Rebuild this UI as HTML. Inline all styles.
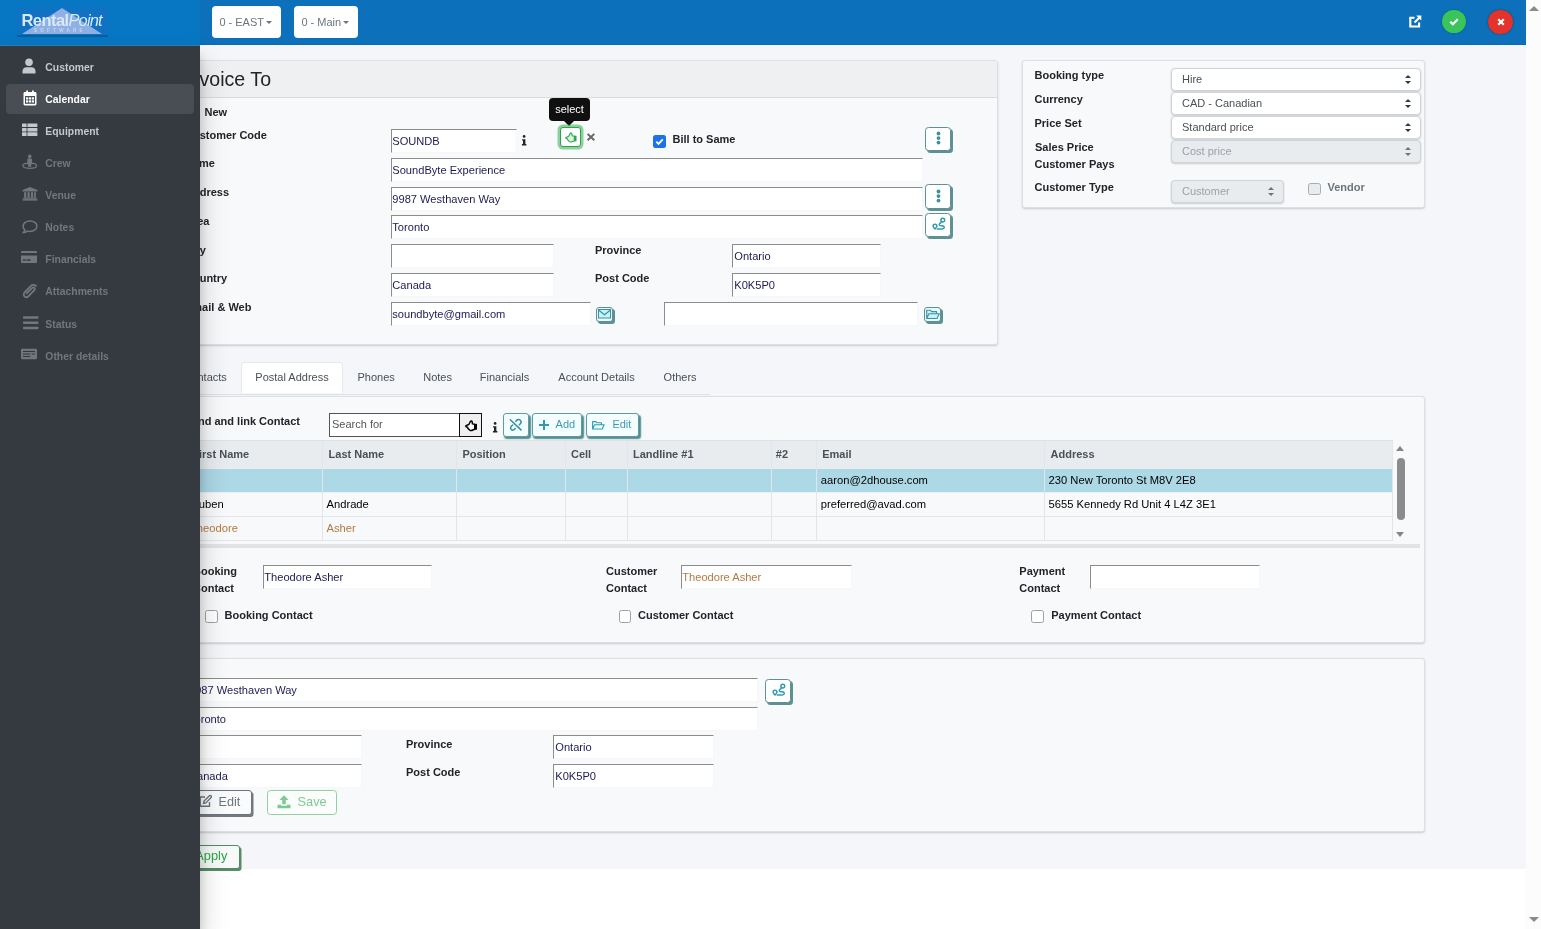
<!DOCTYPE html>
<html>
<head>
<meta charset="utf-8">
<title>Invoice To</title>
<style>
*{box-sizing:border-box;margin:0;padding:0}
html,body{width:1541px;height:929px;overflow:hidden;background:#fff;font-family:"Liberation Sans",sans-serif;font-size:11px;color:#212529}
.abs{position:absolute}
#main{position:absolute;left:0;top:45px;width:1526px;height:824px;background:#f4f6f9}
#hdr{will-change:transform;position:absolute;left:0;top:0;width:1526px;height:45px;background:#0c71ba;border-bottom:1px solid #0b69ad}
#side{will-change:transform;position:absolute;left:0;top:46px;width:200px;height:883px;background:#343a40;box-shadow:0 14px 28px rgba(0,0,0,.2),0 10px 10px rgba(0,0,0,.17)}
#sb{position:absolute;left:1526px;top:0;width:15px;height:929px;background:#fcfcfc}
.card{position:absolute;background:#f8f9fa;border:1px solid #dcdfe3;border-radius:3px;box-shadow:0 1px 2px rgba(0,0,0,.18)}
.lbl{position:absolute;font-weight:700;font-size:11px;white-space:nowrap;color:#212529;line-height:13px}
.inp{position:absolute;height:24px;background:#fff;border:1px solid #f5f7fb;border-top-color:#8c8c8c;border-left-color:#8c8c8c;font-size:11.1px;line-height:23px;padding-left:0.3px;color:#1d1b55;white-space:nowrap;overflow:hidden}
.hbtn{position:absolute;top:6px;height:32px;background:#fff;border-radius:4px;color:#6c757d;font-size:11px;line-height:32px;padding-left:7.400px;white-space:nowrap}
.hbtn i{display:inline-block;width:0;height:0;border-left:3px solid transparent;border-right:3px solid transparent;border-top:3px solid #6c757d;margin-left:2px;vertical-align:2px}
.nav{margin-top:-1px;position:absolute;left:6px;width:188px;height:30px;border-radius:4px;color:#c2c7d0;font-weight:700;font-size:10.4px;line-height:30px}
.nav span{position:absolute;left:39.3px;top:1px;white-space:nowrap}
.nav svg{position:absolute;left:16px;top:7px;width:16px;height:16px;fill:currentColor}
.nav.act{background:#494e55;color:#fff}
.nav.dis{color:#72777e}

.tbtn{position:absolute;background:#fff;border:1px solid #5f9094;border-radius:3.5px;box-shadow:2px 2px 0 #5f9094}
.tbtn svg{position:absolute}
.cb{position:absolute;width:13px;height:13px;border:1px solid #a0a0a0;border-radius:2.5px;background:#fff}

.sel{position:absolute;height:23px;border:1px solid #ced4da;border-radius:4px;background:#fff;box-shadow:0 1px 2px rgba(0,0,0,.18);font-size:11px;line-height:21px;padding-left:10px;color:#495057;white-space:nowrap}
.sel.dis{background:#e9ecef;color:#9ba1a7}
.sel i{position:absolute;right:9px;top:6.5px;width:6px;height:9px}
.sel i:before,.sel i:after{content:"";position:absolute;left:0;width:0;height:0;border-left:3px solid transparent;border-right:3px solid transparent}
.sel i:before{top:0;border-bottom:3.5px solid #343a40}
.sel i:after{bottom:0;border-top:3.5px solid #343a40}
.sel.dis i:before{border-bottom-color:#6c757d}
.sel.dis i:after{border-top-color:#6c757d}

.tab{position:absolute;top:370px;font-size:11px;line-height:14px;color:#495057;white-space:nowrap}
.th{position:absolute;top:448px;font-weight:700;font-size:11px;line-height:13px;color:#495057;white-space:nowrap}
.td{position:absolute;font-size:11.2px;line-height:13px;color:#000;white-space:nowrap}
.vl{position:absolute;top:441px;width:1px;height:99px;background:#e2e5e9}
.cbtn{position:absolute;top:413px;height:24px;background:#f3fdff;border:1px solid #5f9ea0;border-radius:3px;box-shadow:1.500px 2px 1.500px #4d8a8f;color:#3f9aae;font-size:11px;line-height:21.500px;white-space:nowrap}
</style>
</head>
<body>
<div id="main"></div>
<div id="content" class="abs" style="left:0;top:0;width:1526px;height:929px;will-change:transform">

<!-- Invoice To card -->
<div class="card" style="left:170px;top:60px;width:828px;height:285px"></div>
<div class="abs" style="left:171px;top:61px;width:826px;height:37px;background:#eff0f1;border-bottom:1px solid #d9dbde;border-radius:3px 3px 0 0"></div>
<div class="abs" style="left:183.200px;top:66.300px;font-size:19.600px;line-height:26px;color:#212529;white-space:nowrap">Invoice To</div>
<div class="lbl" style="left:204.5px;top:106px">New</div>
<div class="lbl" style="left:185px;top:129px">Customer Code</div>
<div class="lbl" style="left:185px;top:157px">Name</div>
<div class="lbl" style="left:185px;top:186px">Address</div>
<div class="lbl" style="left:185px;top:215px">Area</div>
<div class="lbl" style="left:185px;top:244px">City</div>
<div class="lbl" style="left:185px;top:272px">Country</div>
<div class="lbl" style="left:185px;top:301px">Email &amp; Web</div>
<div class="inp" style="left:391px;top:129px;width:126px">SOUNDB</div>
<div class="inp" style="left:391px;top:158px;width:532px">SoundByte Experience</div>
<div class="inp" style="left:391px;top:187px;width:532px">9987 Westhaven Way</div>
<div class="inp" style="left:391px;top:215px;width:532px">Toronto</div>
<div class="inp" style="left:391px;top:244px;width:163px"></div>
<div class="inp" style="left:391px;top:273px;width:163px">Canada</div>
<div class="inp" style="left:391px;top:302px;width:200px">soundbyte@gmail.com</div>
<div class="inp" style="left:664px;top:302px;width:254px"></div>
<div class="lbl" style="left:595px;top:244px">Province</div>
<div class="lbl" style="left:595px;top:272px">Post Code</div>
<div class="inp" style="left:732px;top:244px;width:149px;padding-left:1.300px">Ontario</div>
<div class="inp" style="left:732px;top:273px;width:149px;padding-left:1.300px">K0K5P0</div>


<!-- info i -->
<svg class="abs" style="left:521.3px;top:135.3px" width="6.4" height="11" viewBox="0 0 7 12"><circle cx="3.4" cy="1.6" r="1.5" fill="#212529"/><path d="M1.2 4.6h3.6v5.2h1.1v1.6H1v-1.6h1.2V6.1H1.2z" fill="#212529"/></svg>
<!-- tooltip -->
<div class="abs" style="left:549px;top:98px;width:41px;height:23px;background:#101010;border-radius:4px;color:#fff;font-size:11px;line-height:22px;text-align:center">select</div>
<div class="abs" style="left:564px;top:121px;width:0;height:0;border-left:5px solid transparent;border-right:5px solid transparent;border-top:5px solid #101010"></div>
<!-- select button -->
<div class="abs" style="left:560px;top:127px;width:21px;height:20px;background:#fff;border:1px solid #28a745;border-radius:3px;box-shadow:0 0 0 2.5px rgba(40,167,69,.5)">
<svg class="abs" style="left:4px;top:4px" width="12" height="11" viewBox="0 0 12 11"><path d="M1 5.400L3.700 4.300 5.100 1.500C5.600.600 6.800.800 6.900 1.800L7.100 3.700 9.300 4.100V8.900L7.500 9.600C6.500 10.100 5.300 10.100 4.500 9.600L3.300 8.500C2.700 8.300 2.500 7.600 2.700 7.100L1.300 6.500C.700 6.300.600 5.600 1 5.400Z" fill="#dcf5e3" stroke="#28a745" stroke-width="1.100" stroke-linejoin="round"/><rect x="9.300" y="3.700" width="2.200" height="5.600" fill="#28a745"/></svg>
</div>
<!-- times -->
<svg class="abs" style="left:586px;top:132px" width="10" height="10" viewBox="0 0 10 10"><path d="M1.600 1.900L8.300 8.300M8.300 1.900L1.600 8.300" stroke="#666" stroke-width="2" fill="none"/></svg>
<!-- checkbox bill to same -->
<div class="abs" style="left:653px;top:134.500px;width:13px;height:13px;background:#1a73e8;border-radius:2.500px"><svg class="abs" style="left:0;top:0" width="13" height="13" viewBox="0 0 13 13"><path d="M3.300 6.700l2.200 2.200 4.300-4.500" stroke="#fff" stroke-width="1.800" fill="none"/></svg></div>
<div class="lbl" style="left:672.500px;top:133px">Bill to Same</div>
<!-- ellipsis buttons -->
<div class="tbtn" style="left:925px;top:127px;width:26px;height:24px"><svg style="left:10px;top:3px" width="5" height="15" viewBox="0 0 5 15"><circle cx="2.5" cy="2.500" r="1.900" fill="#3f8f9f"/><circle cx="2.5" cy="7.100" r="1.900" fill="#3f8f9f"/><circle cx="2.5" cy="11.600" r="1.900" fill="#3f8f9f"/></svg></div>
<div class="tbtn" style="left:925px;top:184px;width:26px;height:25px"><svg style="left:10px;top:3.500px" width="5" height="15" viewBox="0 0 5 15"><circle cx="2.5" cy="2.500" r="1.900" fill="#3f8f9f"/><circle cx="2.5" cy="7.100" r="1.900" fill="#3f8f9f"/><circle cx="2.5" cy="11.600" r="1.900" fill="#3f8f9f"/></svg></div>
<!-- route button -->
<div class="tbtn" style="left:925px;top:213px;width:26px;height:24px"><svg style="left:6px;top:3px" width="15" height="15" viewBox="0 0 15 15"><g fill="none" stroke="#2f9bb3" stroke-width="1.500"><circle cx="10.800" cy="3.200" r="1.900"/><path d="M9.500 5.300C8 6.200 6.600 7 7.600 8.300c.9 1 3.300-.1 4.300 1.100 1 1.300-.2 2.600-1.600 2.600H4.700"/><path d="M3 7.300c1.100 0 1.900.8 1.900 1.800S3 12 3 12 1.100 10.100 1.100 9.100 1.900 7.300 3 7.300z"/></g></svg></div>
<!-- envelope -->
<div class="abs" style="left:596px;top:307px;width:17px;height:15px;background:#e6fbfd;border:1px solid #5f9094;border-radius:3px;box-shadow:2px 2px 0 #5f9094"><svg class="abs" style="left:1px;top:1px" width="13" height="10" viewBox="0 0 13 10"><rect x="0.500" y="0.500" width="12" height="8.500" fill="#c5f3f7" stroke="#3f8f9f" stroke-width="1"/><path d="M0.800 1.200L6.500 5.800 12.200 1.200" fill="none" stroke="#3f8f9f" stroke-width="1.200"/></svg></div>
<!-- folder-open -->
<div class="abs" style="left:924px;top:307px;width:17px;height:15px;background:#e6fbfd;border:1px solid #5f9094;border-radius:3px;box-shadow:2px 2px 0 #5f9094"><svg class="abs" style="left:1px;top:1px" width="14" height="11" viewBox="0 0 14 11"><path d="M0.700 9.500V1.200h3.600l1.300 1.400h5v2M0.700 9.500l2.200-4.700h10.400l-2.300 4.700z" fill="#c5f3f7" stroke="#3f8f9f" stroke-width="1.100" stroke-linejoin="round"/></svg></div>

<!-- right panel -->
<div class="card" style="left:1022px;top:60px;width:403px;height:147.500px"></div>
<div class="lbl" style="left:1034.5px;top:69px">Booking type</div>
<div class="lbl" style="left:1034.5px;top:93px">Currency</div>
<div class="lbl" style="left:1034.5px;top:117px">Price Set</div>
<div class="lbl" style="left:1035px;top:141px">Sales Price</div>
<div class="lbl" style="left:1034.5px;top:158px">Customer Pays</div>
<div class="lbl" style="left:1034.5px;top:181px">Customer Type</div>
<div class="sel" style="left:1171px;top:67.5px;width:250px">Hire<i></i></div>
<div class="sel" style="left:1171px;top:91.7px;width:250px">CAD - Canadian<i></i></div>
<div class="sel" style="left:1171px;top:115.800px;width:250px">Standard price<i></i></div>
<div class="sel dis" style="left:1171px;top:139.500px;width:250px">Cost price<i></i></div>
<div class="sel dis" style="left:1171px;top:179.500px;width:113px">Customer<i></i></div>
<div class="cb" style="left:1308px;top:183px;width:13px;height:12px;background:#e9ecef;border-color:#a9adb2"></div>
<div class="lbl" style="left:1327.5px;top:181px;color:#6c757d">Vendor</div>


<!-- tabs -->
<div class="abs" style="left:170px;top:394px;width:540px;height:1px;background:#dee2e6"></div>
<div class="abs" style="left:241px;top:362px;width:101.500px;height:31px;background:#fff;border:1px solid #e6e9ec;border-bottom-color:#fff;border-radius:4px 4px 0 0"></div>
<div class="tab" style="left:183.400px">Contacts</div>
<div class="tab" style="left:255.300px">Postal Address</div>
<div class="tab" style="left:357.500px">Phones</div>
<div class="tab" style="left:423.200px">Notes</div>
<div class="tab" style="left:479.800px">Financials</div>
<div class="tab" style="left:558.300px">Account Details</div>
<div class="tab" style="left:663.600px">Others</div>


<!-- contacts card -->
<div class="card" style="left:170px;top:396px;width:1255px;height:246.500px"></div>
<div class="lbl" style="left:188.200px;top:415px">Find and link Contact</div>
<div class="abs" style="left:329px;top:413px;width:131px;height:24px;background:#fff;border:1px solid #555;font-size:11px;line-height:21px;padding-left:2px;color:#555">Search for</div>
<div class="abs" style="left:459px;top:413px;width:23px;height:24px;background:#efefef;border:1px solid #111;border-right-width:1.500px;border-bottom-width:1.500px">
<svg class="abs" style="left:4.500px;top:6px" width="12.500" height="11.500" viewBox="0 0 12 11"><path d="M1 5.400L3.700 4.300 5.100 1.500C5.600.600 6.800.800 6.900 1.800L7.100 3.700 9.300 4.100V8.900L7.500 9.600C6.500 10.100 5.300 10.100 4.500 9.600L3.300 8.500C2.700 8.300 2.500 7.600 2.700 7.100L1.300 6.500C.700 6.300.600 5.600 1 5.400Z" fill="#fff" stroke="#000" stroke-width="1.400" stroke-linejoin="round"/><rect x="9.300" y="3.700" width="2.300" height="5.600" fill="#000"/></svg>
</div>
<svg class="abs" style="left:491.500px;top:421.600px" width="6.400" height="11" viewBox="0 0 7 12"><circle cx="3.4" cy="1.6" r="1.5" fill="#212529"/><path d="M1.200 4.600h3.600v5.200h1.100v1.600H1v-1.600h1.200V6.100H1.200z" fill="#212529"/></svg>
<div class="cbtn" style="left:503px;width:25.500px"><svg class="abs" style="left:5px;top:4px" width="13" height="13" viewBox="0 0 13 13"><g fill="none" stroke="#348f9c" stroke-width="1.500" stroke-linecap="round"><path d="M1.300 1.800L12 11.900"/><path d="M6.800 3.200L7.600 2.400C8.800 1.200 10.500 1.300 11.400 2.400 12.300 3.500 12.200 4.900 11.300 5.800L10.400 6.700"/><path d="M3.700 7L2.500 8C1.300 9.200 1.300 10.700 2.200 11.500 3.200 12.400 4.600 12.200 5.500 11.300L6.300 10.500"/></g></svg></div>
<div class="cbtn" style="left:532px;width:50px;padding-left:22.600px"><svg class="abs" style="left:5.500px;top:5.500px" width="10" height="10" viewBox="0 0 10 10"><path d="M5 0v10M0 5h10" stroke="#2f9bb3" stroke-width="2" fill="none"/></svg>Add</div>
<div class="cbtn" style="left:586px;width:52.500px;padding-left:25.400px"><svg class="abs" style="left:5.300px;top:6.500px" width="13" height="9" viewBox="0 0 13 9"><path d="M0.600 8V0.600h3.300l1.100 1.200h4.500v1.700M0.600 8l2-4.200h9.600L10.100 8z" fill="none" stroke="#2f9bb3" stroke-width="1.100" stroke-linejoin="round"/></svg>Edit</div>
<!-- table -->
<div class="abs" style="left:171px;top:440px;width:1222px;height:29px;background:#e9ecef;border-top:1px solid #dee2e6"></div>
<div class="abs" style="left:171px;top:469px;width:1222px;height:23px;background:#add8e6"></div>
<div class="abs" style="left:171px;top:492px;width:1222px;height:1px;background:#eef1f4"></div>
<div class="abs" style="left:171px;top:516px;width:1222px;height:1px;background:#e2e5e9"></div>
<div class="abs" style="left:171px;top:540px;width:1222px;height:1px;background:#e2e5e9"></div>
<div class="vl" style="left:322px"></div><div class="vl" style="left:456px"></div><div class="vl" style="left:565px"></div><div class="vl" style="left:627px"></div><div class="vl" style="left:771px"></div><div class="vl" style="left:816px"></div><div class="vl" style="left:1044px"></div><div class="vl" style="left:1392px"></div>
<div class="th" style="left:192.300px">First Name</div>
<div class="th" style="left:328.600px">Last Name</div>
<div class="th" style="left:462.400px">Position</div>
<div class="th" style="left:571px">Cell</div>
<div class="th" style="left:633px">Landline #1</div>
<div class="th" style="left:775.800px">#2</div>
<div class="th" style="left:822.200px">Email</div>
<div class="th" style="left:1050.500px">Address</div>
<div class="td" style="left:820.800px;top:474px">aaron@2dhouse.com</div>
<div class="td" style="left:1048.600px;top:474px">230 New Toronto St M8V 2E8</div>
<div class="td" style="left:190.700px;top:498px">Ruben</div>
<div class="td" style="left:326.500px;top:498px">Andrade</div>
<div class="td" style="left:820.800px;top:498px">preferred@avad.com</div>
<div class="td" style="left:1048.600px;top:498px">5655 Kennedy Rd Unit 4 L4Z 3E1</div>
<div class="td" style="left:190px;top:522px;color:#b47a40">Theodore</div>
<div class="td" style="left:326.500px;top:522px;color:#b47a40">Asher</div>
<!-- table scrollbar -->
<div class="abs" style="left:1396px;top:446px;width:0;height:0;border-left:4.500px solid transparent;border-right:4.500px solid transparent;border-bottom:5px solid #858585"></div>
<div class="abs" style="left:1396px;top:531.500px;width:0;height:0;border-left:4.500px solid transparent;border-right:4.500px solid transparent;border-top:5px solid #858585"></div>
<div class="abs" style="left:1396.500px;top:458px;width:8.500px;height:62px;background:#8c8c8c;border-radius:4px"></div>
<!-- gray bar -->
<div class="abs" style="left:171px;top:544px;width:1249px;height:4px;background:#e1e3e6"></div>
<!-- contact fields -->
<div class="lbl" style="left:193px;top:563.300px;line-height:17px">Booking<br>Contact</div>
<div class="inp" style="left:263px;top:565px;width:169px">Theodore Asher</div>
<div class="lbl" style="left:606px;top:563.300px;line-height:17px">Customer<br>Contact</div>
<div class="inp" style="left:681px;top:565px;width:171px;color:#b47a40">Theodore Asher</div>
<div class="lbl" style="left:1019.300px;top:563.300px;line-height:17px">Payment<br>Contact</div>
<div class="inp" style="left:1090px;top:565px;width:170px"></div>
<div class="cb" style="left:205px;top:610px;width:12.500px;height:12.500px"></div>
<div class="lbl" style="left:224.600px;top:609px">Booking Contact</div>
<div class="cb" style="left:618.500px;top:610px;width:12.500px;height:12.500px"></div>
<div class="lbl" style="left:638px;top:609px">Customer Contact</div>
<div class="cb" style="left:1031px;top:610px;width:12.500px;height:12.500px"></div>
<div class="lbl" style="left:1051.200px;top:609px">Payment Contact</div>


<!-- address card -->
<div class="card" style="left:170px;top:658px;width:1255px;height:174px"></div>
<div class="inp" style="left:185px;top:678px;width:573px;padding-left:3px">9987 Westhaven Way</div>
<div class="inp" style="left:185px;top:707px;width:573px;padding-left:3px">Toronto</div>
<div class="inp" style="left:185px;top:735px;width:177px"></div>
<div class="inp" style="left:185px;top:764px;width:177px;padding-left:3px">Canada</div>
<div class="lbl" style="left:406px;top:738px">Province</div>
<div class="lbl" style="left:406px;top:766px">Post Code</div>
<div class="inp" style="left:553px;top:735px;width:161px;padding-left:1.300px">Ontario</div>
<div class="inp" style="left:553px;top:764px;width:161px;padding-left:1.300px">K0K5P0</div>
<div class="tbtn" style="left:765px;top:679px;width:26px;height:24px"><svg style="left:6px;top:3px" width="15" height="15" viewBox="0 0 15 15"><g fill="none" stroke="#2f9bb3" stroke-width="1.500"><circle cx="10.800" cy="3.200" r="1.900"/><path d="M9.500 5.300C8 6.200 6.600 7 7.600 8.300c.9 1 3.300-.1 4.300 1.100 1 1.300-.2 2.600-1.600 2.600H4.700"/><path d="M3 7.300c1.100 0 1.900.8 1.900 1.800S3 12 3 12 1.100 10.100 1.100 9.100 1.900 7.300 3 7.300z"/></g></svg></div>
<!-- edit / save -->
<div class="abs" style="left:192px;top:790px;width:59.500px;height:24.500px;background:#fafbfc;border:1px solid #6c757d;border-radius:3px;box-shadow:1.500px 2px 0 #73797f;color:#6c757d;font-size:12.600px;line-height:22px;padding-left:25.600px;white-space:nowrap">Edit
<svg class="abs" style="left:5.700px;top:3px" width="13" height="14" viewBox="0 0 13 14"><g fill="none" stroke="#6c757d" stroke-width="1.400"><path d="M6 3H1.200v9.300h9.300V8"/><path d="M4.600 9.400l.5-2.300 5.300-5.300c.5-.5 1.300-.5 1.700 0 .5.500.5 1.300 0 1.700L6.900 8.900z"/></g></svg></div>
<div class="abs" style="left:267px;top:790px;width:70px;height:24.500px;background:#fafdfb;border:1px solid #93cfa2;border-radius:3.500px;color:#7fca92;font-size:12.800px;line-height:22px;padding-left:29.500px;white-space:nowrap">Save
<svg class="abs" style="left:9px;top:4px" width="14" height="14" viewBox="0 0 14 14"><path d="M7 0.300L11.600 5H8.800v4.300H5.200V5H2.400z" fill="#7fca92"/><path d="M0.500 9.800h3.700v1h5.600v-1h3.700v3.400h-13z" fill="#7fca92"/></svg></div>
<!-- apply -->
<div class="abs" style="left:186px;top:845px;width:53.500px;height:23.500px;background:#f8faf9;border:1px solid #4f8c62;border-radius:3px;box-shadow:1.500px 2px 0 #5a8a68;color:#28a745;font-size:12.800px;line-height:19.500px;padding-left:8.300px;white-space:nowrap">Apply</div>

</div>

<div id="hdr">
  <div class="hbtn" style="left:212px;width:69px">0 - EAST<i></i></div>
  <div class="hbtn" style="left:294px;width:64px">0 - Main<i></i></div>
  <div class="abs" style="left:0;top:0;width:200px;height:46px;background:#0777c3;border-bottom:1px solid #2f7fb4"></div>
  <!-- logo -->
  <svg class="abs" style="left:16px;top:6px" width="94" height="32" viewBox="0 0 94 32">
    <rect x="1" y="2" width="91" height="27" fill="#1a6fc4" opacity=".55"/>
    <rect x="1" y="29" width="91" height="2" fill="#084f8c" opacity=".6"/>
    <path d="M46 2L86 28H6z" fill="#8fb0e2"/>
    <text x="5.500" y="20.300" font-family="Liberation Sans, sans-serif" font-size="16.500" font-weight="700" fill="#dbe8fa" letter-spacing="-.55">Rental</text>
    <text x="52.500" y="20.300" font-family="Liberation Sans, sans-serif" font-size="16.500" font-style="italic" fill="#dbe8fa" letter-spacing="-.9">Point</text>
    <text x="18" y="26.300" font-family="Liberation Sans, sans-serif" font-size="4.500" font-weight="700" fill="#c7d6f1" letter-spacing="3.300">SOFTWARE</text>
  </svg>
  <!-- external link -->
  <svg class="abs" style="left:1408.500px;top:14.500px" width="13" height="13" viewBox="0 0 13 13"><path d="M5.500 2.700H1.300v8.800h8.800V7.500" fill="none" stroke="#fff" stroke-width="2.100"/><path d="M7.300 0.600h5v5l-1.700-1.700L6.300 8.200 4.800 6.700 9 2.400z" fill="#fff"/></svg>
  <!-- ok -->
  <div class="abs" style="left:1442.300px;top:10px;width:23.400px;height:23.400px;border-radius:50%;background:#3ac45b;box-shadow:0 0 1.500px rgba(0,60,0,.5)"><svg class="abs" style="left:6.700px;top:7.800px" width="10" height="8" viewBox="0 0 11 9"><path d="M1.300 4.300l2.900 2.800 5.500-5.600" fill="none" stroke="#fff" stroke-width="2.400"/></svg></div>
  <!-- close -->
  <div class="abs" style="left:1488.300px;top:9.700px;width:24.600px;height:24.600px;border-radius:50%;background:#e2332d;box-shadow:0 0 2px rgba(90,0,0,.6)"><svg class="abs" style="left:8.300px;top:8.300px" width="8" height="8" viewBox="0 0 8 8"><path d="M1.200 1.200L6.800 6.800M6.800 1.200L1.200 6.800" fill="none" stroke="#fff" stroke-width="2.200"/></svg></div>
</div>

<div id="side">
<div class="nav " style="top:7.0px"><svg style="left:15.3px;top:6.0px" width="14" height="16" viewBox="0 0 14 16"><circle cx="7" cy="4.3" r="3.8"/><path d="M0.500 15.500v-2.300c0-2.300 1.800-3.900 4-3.900h5c2.200 0 4 1.600 4 3.900v2.300z"/></svg><span>Customer</span></div>
<div class="nav act" style="top:39.2px"><svg style="left:15.7px;top:5.6px" width="14" height="16" viewBox="0 0 14 16"><path d="M0.500 3.500c0-.8.600-1.400 1.400-1.400h1.300V.6h1.800v1.500h4V.6h1.800v1.500h1.300c.8 0 1.400.6 1.400 1.400V14c0 .8-.6 1.400-1.400 1.400H1.900c-.8 0-1.400-.6-1.400-1.400z"/><rect x="2" y="6" width="10" height="7.800" fill="#494e55"/><rect x="3" y="7.300" width="2.200" height="2.200"/><rect x="5.900" y="7.300" width="2.200" height="2.200"/><rect x="8.800" y="7.300" width="2.200" height="2.200"/><rect x="3" y="10.300" width="2.200" height="2.200"/><rect x="5.900" y="10.300" width="2.200" height="2.200"/><rect x="8.800" y="10.300" width="2.200" height="2.200"/></svg><span>Calendar</span></div>
<div class="nav " style="top:71.2px"><svg style="left:16.0px;top:5.6px" width="16" height="13" viewBox="0 0 16 13"><rect x="0" y="0" width="4.600" height="3.600" rx=".5"/><rect x="5.400" y="0" width="10" height="3.600" rx=".5"/><rect x="0" y="4.400" width="4.600" height="3.600" rx=".5"/><rect x="5.400" y="4.400" width="10" height="3.600" rx=".5"/><rect x="0" y="8.800" width="4.600" height="3.600" rx=".5"/><rect x="5.400" y="8.800" width="10" height="3.600" rx=".5"/></svg><span>Equipment</span></div>
<div class="nav dis" style="top:103.1px"><svg style="left:16.0px;top:5.7px" width="16" height="15" viewBox="0 0 16 15"><circle cx="7.700" cy="1.900" r="1.800"/><path d="M5.300 5.200c0-.8.600-1.300 1.300-1.300h2.200c.7 0 1.300.5 1.300 1.300v3.300h-.8v3.700H6.100V8.500h-.8z"/><ellipse cx="7.700" cy="11.300" rx="6.800" ry="2.600" fill="none" stroke="currentColor" stroke-width="1.300"/></svg><span>Crew</span></div>
<div class="nav dis" style="top:135.0px"><svg style="left:15.5px;top:5.6px" width="15" height="13" viewBox="0 0 15 13"><path d="M7.500 0L14.500 2.800v1.300H.5V2.800z"/><rect x="2" y="4.800" width="2" height="5"/><rect x="5.200" y="4.800" width="2" height="5"/><rect x="8.400" y="4.800" width="2" height="5"/><rect x="11.400" y="4.800" width="1.600" height="5"/><rect x="1.200" y="9.800" width="12.600" height="1.200"/><rect x=".5" y="11.300" width="14" height="1.400"/></svg><span>Venue</span></div>
<div class="nav dis" style="top:167.0px"><svg style="left:16.0px;top:6.5px" width="16" height="14" viewBox="0 0 16 14"><path d="M8 .9c3.800 0 6.900 2.400 6.900 5.300S11.800 11.500 8 11.500c-.9 0-1.800-.1-2.600-.4-.8.700-2.200 1.500-4 1.500.8-.9 1.400-2 1.500-2.700C1.700 9 1.100 7.700 1.100 6.200 1.100 3.300 4.200.9 8 .9z" fill="none" stroke="currentColor" stroke-width="1.500"/></svg><span>Notes</span></div>
<div class="nav dis" style="top:199.2px"><svg style="left:15.0px;top:5.3px" width="17" height="13" viewBox="0 0 17 13"><path d="M0 1.300C0 .6.600 0 1.300 0h14.400c.7 0 1.300.6 1.300 1.300v.9H0zM0 4.800h17v6.900c0 .7-.6 1.300-1.300 1.300H1.300C.6 13 0 12.400 0 11.700z"/><rect x="2" y="9" width="2.800" height="1.600" fill="#343a40"/><rect x="5.800" y="9" width="4.300" height="1.600" fill="#343a40"/></svg><span>Financials</span></div>
<div class="nav dis" style="top:231.4px"><svg style="left:15.8px;top:6.2px" width="14" height="15" viewBox="0 0 14 15"><path d="M4.200 8.800l4.900-5c.6-.6 1.500-.6 2 0 .6.600.6 1.500 0 2.100L5.400 11.700c-1 1-2.500 1-3.500 0s-1-2.600 0-3.600L7.800 2c1.400-1.400 3.500-1.400 4.800 0" fill="none" stroke="currentColor" stroke-width="1.700" stroke-linecap="round" transform="translate(0,.8)"/></svg><span>Attachments</span></div>
<div class="nav dis" style="top:264.2px"><svg style="left:17.0px;top:6.0px" width="12.500" height="10.700" viewBox="0 0 14 12"><rect x="0" y="0" width="13.500" height="2.200" rx=".6"/><rect x="0" y="4.600" width="13.500" height="2.200" rx=".6"/><rect x="0" y="9.200" width="13.500" height="2.200" rx=".6"/></svg><span>Status</span></div>
<div class="nav dis" style="top:296.4px"><svg style="left:15.0px;top:5.1px" width="17" height="11" viewBox="0 0 17 11"><rect x="0" y="0" width="17" height="11" rx="1.200"/><rect x="2" y="2.200" width="13" height="1.200" fill="#343a40"/><rect x="2" y="5" width="8" height="1.100" fill="#343a40"/><rect x="11.500" y="5" width="3.500" height="1.100" fill="#343a40"/><rect x="2" y="7.600" width="8" height="1.100" fill="#343a40"/></svg><span>Other details</span></div>
</div>

<div id="sb">
<div class="abs" style="left:2.500px;top:5.500px;width:0;height:0;border-left:5px solid transparent;border-right:5px solid transparent;border-bottom:5.500px solid #8a8a8a"></div>
<div class="abs" style="left:2.500px;top:916.500px;width:0;height:0;border-left:5px solid transparent;border-right:5px solid transparent;border-top:5.500px solid #8a8a8a"></div>
</div>
</body>
</html>
